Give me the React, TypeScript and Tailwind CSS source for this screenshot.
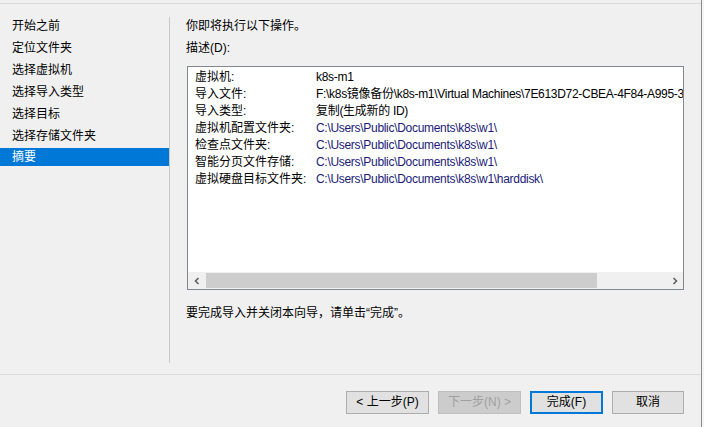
import React from 'react';

const steps = ['开始之前', '定位文件夹', '选择虚拟机', '选择导入类型', '选择目标', '选择存储文件夹', '摘要'];

const details: { label: string; value: string; path?: boolean }[] = [
  { label: '虚拟机:', value: 'k8s-m1' },
  { label: '导入文件:', value: 'F:\\k8s镜像备份\\k8s-m1\\Virtual Machines\\7E613D72-CBEA-4F84-A995-3C3E4B1F0D2A.vmcx' },
  { label: '导入类型:', value: '复制(生成新的 ID)' },
  { label: '虚拟机配置文件夹:', value: 'C:\\Users\\Public\\Documents\\k8s\\w1\\', path: true },
  { label: '检查点文件夹:', value: 'C:\\Users\\Public\\Documents\\k8s\\w1\\', path: true },
  { label: '智能分页文件存储:', value: 'C:\\Users\\Public\\Documents\\k8s\\w1\\', path: true },
  { label: '虚拟硬盘目标文件夹:', value: 'C:\\Users\\Public\\Documents\\k8s\\w1\\harddisk\\', path: true },
];

const font = { fontFamily: '"Liberation Sans", "Noto Sans CJK SC", sans-serif' };

export default function App() {
  return (
    <div className="flex h-[427px] w-[704px] overflow-hidden bg-[#f0f0f0] text-[12px] text-black" style={font}>
      <div className="flex w-[701px] shrink-0 flex-col">
        <div className="mt-[3px] h-px bg-[#dadada]" />

        {/* main area */}
        <div className="flex h-[370px] pt-[13px] pb-[11px]">
          <div className="flex w-[170px] shrink-0 flex-col gap-[4px] border-r border-[#c8c8c8]">
            {steps.map((s, i) => (
              <div
                key={s}
                className={
                  'h-[18px] whitespace-nowrap pl-[12px] leading-[19px] ' +
                  (i === steps.length - 1 ? '-mt-px bg-[#0078d7] text-white' : '')
                }
              >
                {s}
              </div>
            ))}
          </div>

          <div className="flex min-w-0 flex-1 flex-col pl-[16px] pr-[17px]">
            <div className="h-[18px] leading-[19px]">你即将执行以下操作。</div>
            <div className="mt-[4px] h-[18px] leading-[19px]">描述(D):</div>
            <div className="mt-[9px] ml-px flex h-[224px] flex-col border border-[#828790] bg-white">
              <div className="flex-1 overflow-hidden pt-[2px] pl-[7px]">
                {details.map((d) => (
                  <div key={d.label} className="flex h-[17px] whitespace-nowrap leading-[17px]">
                    <span className="w-[121px] shrink-0">{d.label}</span>
                    <span className={'tracking-[-0.3px] ' + (d.path ? 'text-[#1a1a78]' : '')}>{d.value}</span>
                  </div>
                ))}
              </div>
              <div className="flex h-[17px] shrink-0 bg-[#f0f0f0]">
                <div className="flex w-[17px] items-center justify-center">
                  <svg width="8" height="8" viewBox="0 0 8 8">
                    <path d="M5.5 1 L2.5 4 L5.5 7" fill="none" stroke="#606060" strokeWidth="1.6" />
                  </svg>
                </div>
                <div className="my-px ml-px w-[391px] bg-[#cdcdcd]" />
                <div className="flex-1" />
                <div className="flex w-[17px] items-center justify-center">
                  <svg width="8" height="8" viewBox="0 0 8 8">
                    <path d="M2.5 1 L5.5 4 L2.5 7" fill="none" stroke="#606060" strokeWidth="1.6" />
                  </svg>
                </div>
              </div>
            </div>
            <div className="mt-[14px] h-[18px] leading-[19px]">要完成导入并关闭本向导，请单击“完成”。</div>
          </div>
        </div>

        <div className="h-px bg-[#dadada]" />

        {/* buttons */}
        <div className="flex justify-end gap-[9px] pt-[16px] pr-[17px]">
          <button className="h-[23px] w-[83px] border border-[#adadad] bg-[#e1e1e1] leading-[21px]">&lt; 上一步(P)</button>
          <button className="h-[23px] w-[83px] border border-[#bfbfbf] bg-[#cccccc] leading-[21px] text-[#a0a0a0]">下一步(N) &gt;</button>
          <button className="h-[23px] w-[73px] border-2 border-[#0078d7] bg-[#e1e1e1] leading-[19px]">完成(F)</button>
          <button className="h-[23px] w-[72px] border border-[#adadad] bg-[#e1e1e1] leading-[21px]">取消</button>
        </div>
      </div>
      <div className="w-px shrink-0 bg-[#8c8c8c]" />
      <div className="flex-1 bg-[#f4f4f4]" />
    </div>
  );
}
